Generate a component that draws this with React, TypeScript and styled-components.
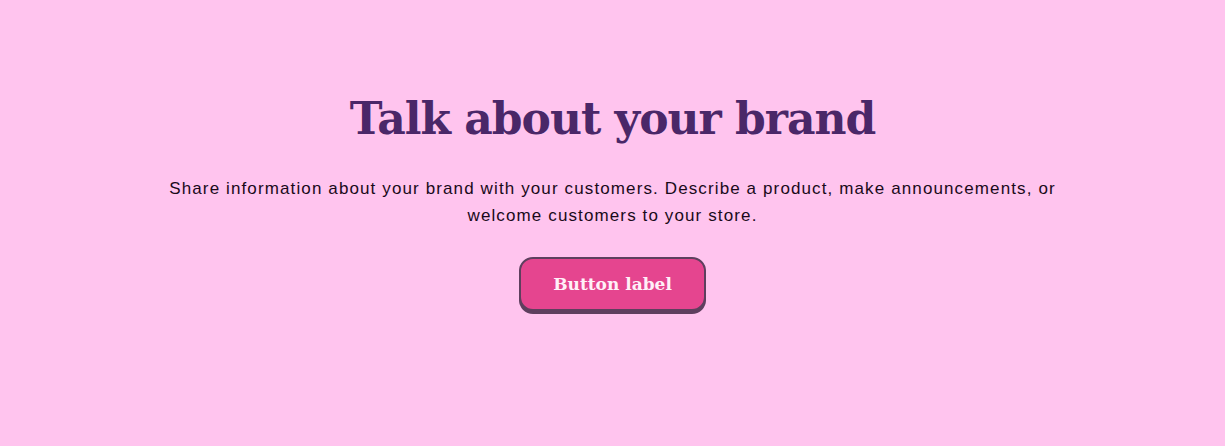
import React from "react";
import styled, { createGlobalStyle } from "styled-components";

const GlobalStyle = createGlobalStyle`
  html, body {
    margin: 0;
    padding: 0;
    background: #ffc4ee;
  }
`;

const Section = styled.section`
  min-height: 446px;
  box-sizing: border-box;
  background: #ffc4ee;
  padding: 93px 20px 0;
  display: flex;
  flex-direction: column;
  align-items: center;
  text-align: center;
`;

const Heading = styled.h2`
  margin: 0;
  font-family: "DejaVu Serif", "Liberation Serif", serif;
  font-weight: 700;
  font-size: 44px;
  line-height: 52.8px;
  letter-spacing: -1px;
  color: #4a2768;
`;

const Text = styled.p`
  margin: 29px 0 0;
  max-width: 900px;
  font-family: "Liberation Sans", Arial, sans-serif;
  font-size: 17px;
  line-height: 27px;
  letter-spacing: 1.12px;
  color: #1a0a1a;
`;

const Button = styled.button`
  margin-top: 28px;
  width: 187px;
  height: 54px;
  border: 2px solid #5e3f5e;
  border-radius: 14px;
  background: #e5458f;
  box-shadow: 0 3px 0 #5e3f5e;
  color: #fff0f8;
  font-family: "DejaVu Serif", "Liberation Serif", serif;
  font-weight: 700;
  font-size: 17px;
  cursor: pointer;
`;

export default function App() {
  return (
    <>
      <GlobalStyle />
      <Section>
        <Heading>Talk about your brand</Heading>
        <Text>
          Share information about your brand with your customers. Describe a
          product, make announcements, or welcome customers to your store.
        </Text>
        <Button>Button label</Button>
      </Section>
    </>
  );
}
